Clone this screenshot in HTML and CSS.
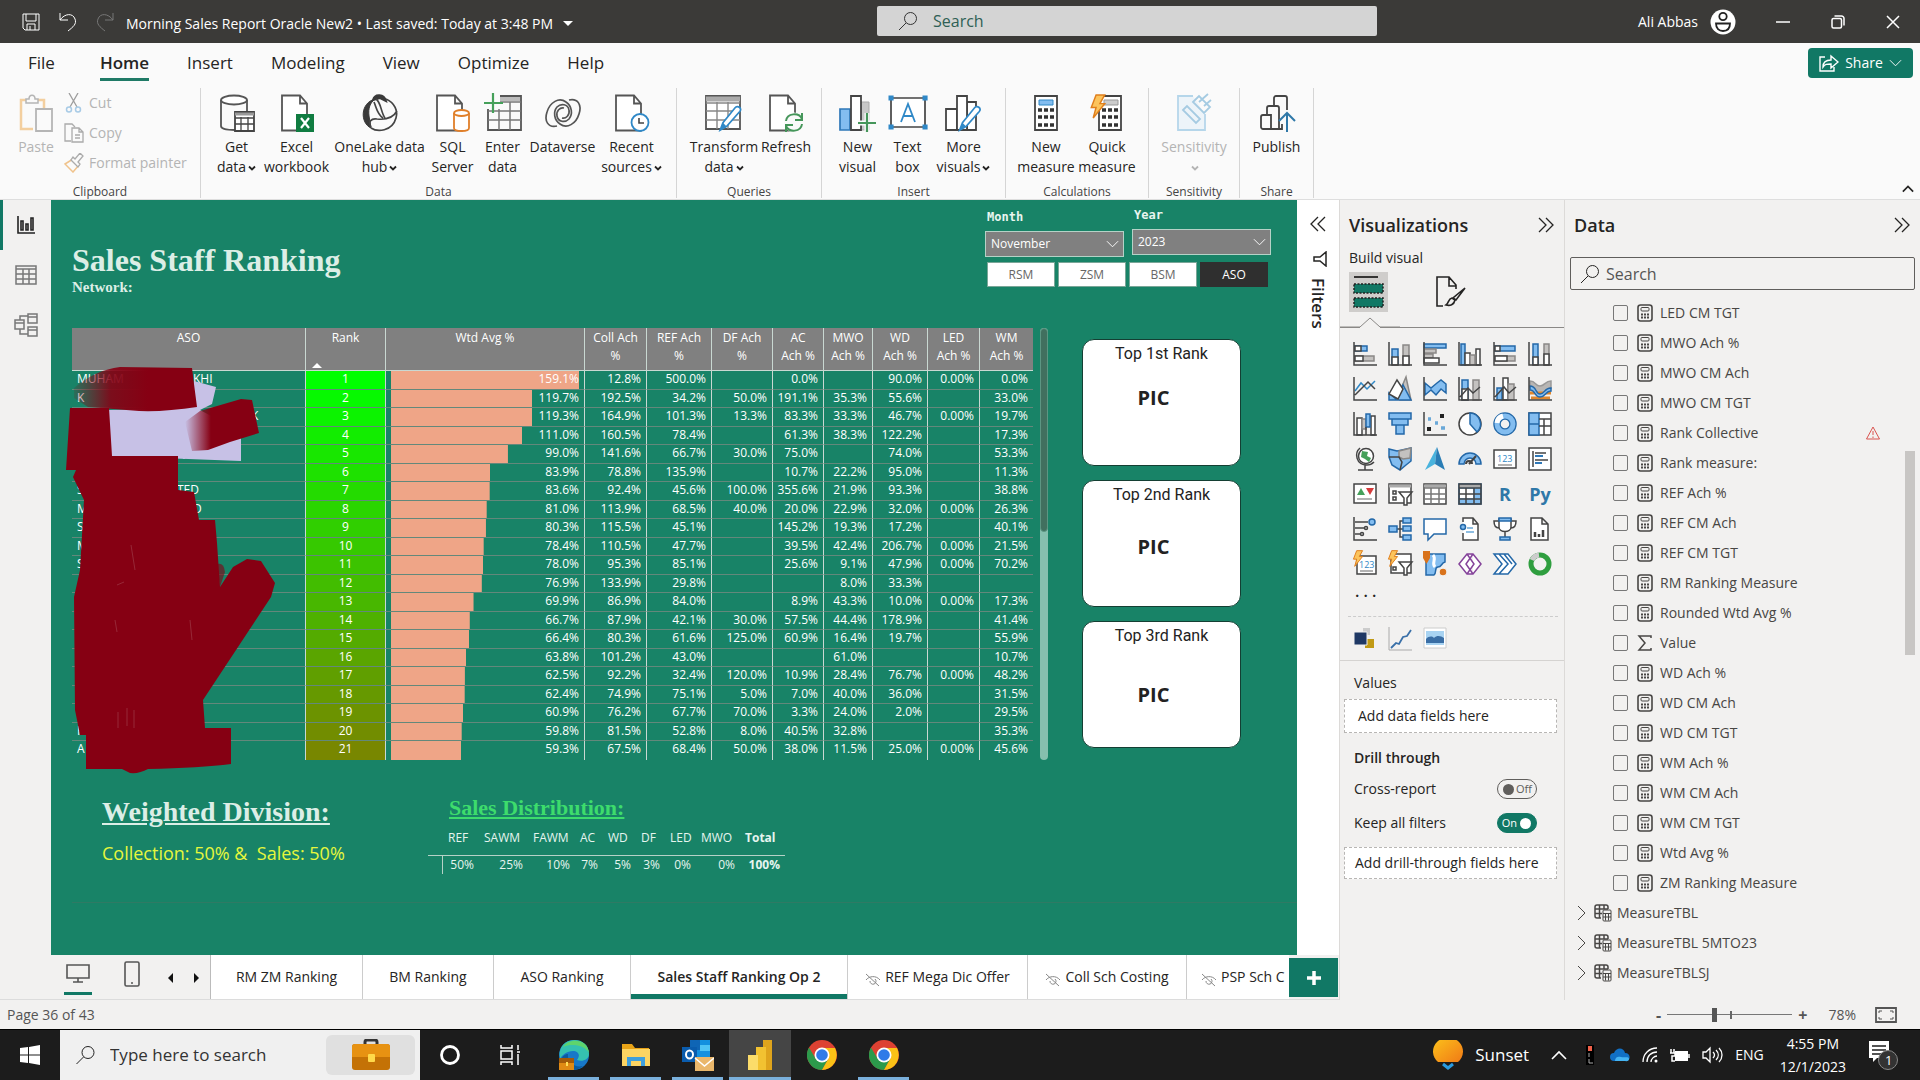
FILE: index.html
```html
<!DOCTYPE html>
<html lang="en">
<head>
<meta charset="utf-8">
<title>Morning Sales Report Oracle New2</title>
<link rel="stylesheet" href="styles.css">
</head>
<body>
<svg class="defs" aria-hidden="true">
  <symbol id="i-search" viewBox="0 0 20 20"><circle cx="12.500" cy="7.500" r="6" /><path d="M8 12 1 19"/></symbol>
  <symbol id="i-down" viewBox="0 0 8 8"><path d="M1 2.500 4 5.500 7 2.500" stroke-width="1.800"/></symbol>
  <symbol id="i-chev" viewBox="0 0 14 8"><path d="M1 1 7 7 13 1"/></symbol>
  <symbol id="i-right" viewBox="0 0 10 16"><path d="M1 1 8 8 1 15"/></symbol>
  <symbol id="i-dbl" viewBox="0 0 16 16"><path d="M1 1 8 8 1 15M8 1 15 8 8 15" stroke-width="1.300"/></symbol>
  <symbol id="i-calc" viewBox="0 0 16 18"><rect x="1" y="1" width="14" height="16" rx="2.500" stroke-width="1.600"/><rect x="4" y="3.500" width="8" height="3.500" rx="1"/><path d="M4 10.500h2M7 10.500h2M10 10.500h2M4 13.500h2M7 13.500h2M10 13.500h2" stroke-width="2"/></symbol>
  <symbol id="i-mtable" viewBox="0 0 18 18"><path d="M14 5V3a2 2 0 0 0-2-2H3a2 2 0 0 0-2 2v9a2 2 0 0 0 2 2h4M1 5h13M1 9.500h7M5.500 1v13M10 1v4" stroke-width="1.500"/><rect x="9" y="6" width="8" height="11" rx="1"/><path d="M9 9.500h8M11.500 9.500v7M14.500 9.500v7M9 13h8" /></symbol>
  <symbol id="i-page" viewBox="0 0 34 38"><path d="M2 1.500h18l7 8v27H2zM20 1.500v8h7" fill="#fff" stroke="#555" stroke-width="1.800"/></symbol>
  <symbol id="i-hidden" viewBox="0 0 16 14"><path d="M1 1 14 13M1 7C4 3 11 2 15 7M5 8a3 3 0 1 0 5-2"/></symbol>
  <symbol id="i-chrome" viewBox="0 0 30 30"><circle cx="15" cy="15" r="15" fill="#dd4132"/><path d="M2 7.500A15 15 0 0 0 15 30L21.500 18.500 8.500 18.500z" fill="#2c9a4b"/><path d="M15 30A15 15 0 0 0 28 8H15l6.500 10.500z" fill="#fbc116"/><circle cx="15" cy="15" r="7.500" fill="#fff"/><circle cx="15" cy="15" r="5.800" fill="#2f7be8"/></symbol>
  <symbol id="i-pencil" viewBox="0 0 24 30"><path d="M2 28 5 20 18 4a3 3 0 0 1 5 4L9 24z" fill="#fff" stroke="#2f88c7" stroke-width="1.800"/><path d="M2 28 5 20 9 24z" fill="#2f88c7"/></symbol>
  <symbol id="i-bolt" viewBox="0 0 16 26"><path d="M6 1h9l-5 9h5L3 25 6 14H1z" fill="#fcc45c" stroke="#e07f1c" stroke-width="1.500"/></symbol>
</svg>

<header class="titlebar">
  <div class="quick">
    <button aria-label="Save"><svg width="18" height="18" viewBox="0 0 18 18"><path d="M1 1h16v16H3l-2-2zM4 1v7h10V1M5 17v-6h8v6M8 13v4"/></svg></button>
    <button aria-label="Undo"><svg width="18" height="20" viewBox="0 0 18 20"><path d="M1 1v7h8M1 8C6 1 14 1 16 7c2 5-2 8-7 12"/></svg></button>
    <button aria-label="Redo" class="dim"><svg width="18" height="20" viewBox="0 0 18 20"><path d="M17 1v7H9M17 8C12 1 4 1 2 7c-2 5 2 8 7 12"/></svg></button>
  </div>
  <button class="doc">Morning Sales Report Oracle New2 • Last saved: Today at 3:48 PM <i class="caret"></i></button>
  <label class="topsearch"><svg width="20" height="20"><use href="#i-search"/></svg><input type="text" placeholder="Search" aria-label="Search"></label>
  <div class="account"><span>Ali Abbas</span>
    <svg width="26" height="26" viewBox="0 0 26 26"><circle cx="13" cy="13" r="12.500" fill="#fff"/><circle cx="13" cy="7.500" r="3.700" stroke="#222" stroke-width="1.800"/><path d="M6 14.500h14c0 5-3 7.500-7 7.500s-7-2.500-7-7.500z" stroke="#222" stroke-width="1.800"/></svg></div>
  <div class="winbtns">
    <button aria-label="Minimize"><svg width="14" height="14" viewBox="0 0 14 14"><path d="M0 7h14" stroke-width="1.500"/></svg></button>
    <button aria-label="Restore"><svg width="14" height="14" viewBox="0 0 14 14"><rect x="1" y="3.500" width="9.500" height="9.500" rx="1.500" stroke-width="1.500"/><path d="M3.500 1h7A2.500 2.500 0 0 1 13 3.500v7" stroke-width="1.500"/></svg></button>
    <button aria-label="Close"><svg width="14" height="14" viewBox="0 0 14 14"><path d="M1 1 13 13M13 1 1 13" stroke-width="1.500"/></svg></button>
  </div>
</header>

<nav class="menu">
  <a href="#file">File</a><a href="#home" class="on">Home</a><a href="#insert">Insert</a><a href="#modeling">Modeling</a><a href="#view">View</a><a href="#optimize">Optimize</a><a href="#help">Help</a>
  <button class="share"><svg width="20" height="18" viewBox="0 0 20 18"><path d="M6 3H1v14h14v-4M4 13c0-5 3-7 8-7V2l7 6-7 6v-4c-4 0-6 0-8 3z" stroke-width="1.400"/></svg>Share<svg width="13" height="8"><use href="#i-chev"/></svg></button>
</nav>

<section class="ribbon">
  <div class="group clip off">
    <div class="tools">
      <button class="tool paste"><svg width="34" height="38" viewBox="0 0 34 38"><path d="M14 35H2V6h5M19 6h6v8" stroke="#f3cf9f" stroke-width="2.500"/><path d="M7 9V5h3c0-5 6-5 6 0h3v4z" fill="#fafafa" stroke="#b5b5b5" stroke-width="1.500"/><path d="M17 15h16v22H17z" fill="#fafafa" stroke="#b5b5b5" stroke-width="1.800"/></svg>Paste</button>
      <div class="minis">
        <button><svg width="20" height="20" viewBox="0 0 20 20"><path d="M5 0 13 14M14 0 6 14" stroke="#9d9d9d" stroke-width="1.300"/><circle cx="5" cy="16.500" r="2.500" stroke="#a8cbe6" stroke-width="1.500"/><circle cx="14" cy="16.500" r="2.500" stroke="#a8cbe6" stroke-width="1.500"/></svg>Cut</button>
        <button><svg width="20" height="20" viewBox="0 0 20 20"><path d="M7 18H1V1h7l3 3" stroke="#ababab" stroke-width="1.300"/><path d="M8 5h7l4 4v10H8zM11 12h5M11 15h5M15 5v4h4" stroke="#ababab" stroke-width="1.300"/></svg>Copy</button>
        <button><svg width="20" height="20" viewBox="0 0 20 20"><path d="M1 11 9 6l6 6-6 7z" stroke="#f0c38c" stroke-width="1.500"/><path d="m7 7 7 7 2-3-2-2 5-6-3-3-5 6-2-2z" fill="#fafafa" stroke="#ababab" stroke-width="1.300"/></svg>Format painter</button>
      </div>
    </div>
    <p>Clipboard</p>
  </div>
  <div class="group g-data">
    <div class="tools">
      <button class="tool w52"><svg width="36" height="38" viewBox="0 0 36 38"><path d="M2 6v26c0 3 6 4 14 4M28 6v12" stroke="#555" stroke-width="1.800"/><ellipse cx="15" cy="6" rx="13" ry="4.500" fill="#fff" stroke="#555" stroke-width="1.800"/><path d="M16 18h19v19H16z" fill="#fff" stroke="#444" stroke-width="1.800"/><path d="M16 20h19" stroke="#999" stroke-width="3"/><path d="M16 24h19M16 30h19M22 23v14M29 23v14" stroke="#444" stroke-width="1.300"/></svg><span>Get<br>data<svg class="dn"><use href="#i-down"/></svg></span></button>
      <button class="tool w68"><svg width="34" height="38"><use href="#i-page"/><path d="M16 20h18v18H16z" fill="#107c41"/><path d="m21 24 8 10M29 24l-8 10" stroke="#fff" stroke-width="2.200"/></svg><span>Excel<br>workbook</span></button>
      <button class="tool w98"><svg width="36" height="38" viewBox="0 0 36 38"><path d="M13 5C-2 9-2 29 9 34L7 22C6 14 8 9 13 5z" fill="#3a3a3a" stroke="#3a3a3a"/><path d="M11 6C13-1 22 0 24 7L18 4z" fill="#3a3a3a" stroke="#3a3a3a" stroke-width="2"/><path d="M24 5c9 4 12 12 10 19-4 14-19 14-25 10M12 8c3 7 3 12 9 16M9 33c-3-5 0-9 6-8 9 1 16-1 20-8M14 5c5 3 5 14 9 19" stroke="#444" stroke-width="1.700"/></svg><span>OneLake data<br>hub<svg class="dn"><use href="#i-down"/></svg></span></button>
      <button class="tool w48"><svg width="36" height="38"><use href="#i-page" width="34" height="38"/><path d="M19 19v15c0 4 15 4 15 0V19" fill="#fff" stroke="#e07f2a" stroke-width="1.800"/><ellipse cx="26.500" cy="19" rx="7.500" ry="3" fill="#fff" stroke="#e07f2a" stroke-width="1.800"/></svg><span>SQL<br>Server</span></button>
      <button class="tool w52"><svg width="38" height="38" viewBox="0 0 38 38"><path d="M4 15v21h33V2H16" stroke="#555" stroke-width="1.800"/><path d="M16 3h20v4H16z" fill="#bbb"/><path d="M4 17h33M4 26h33M15 15v21M26 8v28M16 8h21" stroke="#777" stroke-width="1.500"/><path d="M9-1v20M0 9h19" stroke="#45a05a" stroke-width="2.200"/></svg><span>Enter<br>data</span></button>
      <button class="tool w68"><svg width="36" height="38" viewBox="0 0 36 38"><g stroke="#555" stroke-width="1.700"><path d="M12 32C3 34-1 27 2 18 5 8 14 3 21 8c6 4 7 12 3 17-4 4-11 3-12-3-1-5 3-9 7-8"/><path d="M24 6C33 4 37 11 34 20 31 30 22 35 15 30c-6-4-7-12-3-17 4-4 11-3 12 3 1 5-3 9-7 8"/></g></svg><span>Dataverse</span></button>
      <button class="tool w70"><svg width="36" height="38"><use href="#i-page" width="34" height="38"/><circle cx="26" cy="28.500" r="8.500" fill="#fff" stroke="#2f88c7" stroke-width="1.800"/><path d="M25 24v5h5" stroke="#444" stroke-width="1.600"/></svg><span>Recent<br>sources<svg class="dn"><use href="#i-down"/></svg></span></button>
    </div>
    <p>Data</p>
  </div>
  <div class="group g-queries">
    <div class="tools">
      <button class="tool w74"><svg width="40" height="38"><path d="M2 2h34v33H2z" fill="#fff" stroke="#555" stroke-width="1.800"/><path d="M2 5h34" stroke="#aaa" stroke-width="5"/><path d="M2 9h34M2 17h34M2 26h34M13 8v27M24 8v27" stroke="#888" stroke-width="1.400"/><use href="#i-pencil" x="12" y="10" width="27" height="28"/></svg><span>Transform<br>data<svg class="dn"><use href="#i-down"/></svg></span></button>
      <button class="tool w50"><svg width="36" height="38"><use href="#i-page" width="34" height="38"/><circle cx="26" cy="28.500" r="10" fill="#fafafa"/><path d="M18 27c1-8 13-9 16-2M34 19v7h-7M34 30c-1 8-13 9-16 2M18 38v-7h7" stroke="#45965a" stroke-width="2"/></svg><span>Refresh</span></button>
    </div>
    <p>Queries</p>
  </div>
  <div class="group g-insert">
    <div class="tools">
      <button class="tool w50"><svg width="38" height="38"><path d="M1 15h10v21H1z" fill="#83bdf0" stroke="#2f78b8" stroke-width="1.700"/><path d="M22 8h8v28h-8z" fill="#c8c8c8" stroke="#aaa"/><path d="M12 2h10v34H12z" fill="#fff" stroke="#444" stroke-width="1.800"/><path d="M28 19v19M19 29h18" stroke="#fafafa" stroke-width="5"/><path d="M28 19v19M19 29h18" stroke="#45965a" stroke-width="2.200"/></svg><span>New<br>visual</span></button>
      <button class="tool w50"><svg width="38" height="38"><path d="M2 4h34v29H2z" fill="#fff" stroke="#444" stroke-width="1.700"/><path d="M2 4h.1M36 4h.1M2 33h.1M36 33h.1" stroke="#2f88c7" stroke-width="5" stroke-linecap="square"/><path d="m12 28 7-18 7 18M14 22h10" stroke="#2f88c7" stroke-width="1.800"/></svg><span>Text<br>box</span></button>
      <button class="tool w62"><svg width="38" height="38"><path d="M1 15h11v21H1zM22 8h9v28h-9z" fill="#fff" stroke="#444" stroke-width="1.800"/><path d="M12 2h10v34H12z" fill="#fff" stroke="#444" stroke-width="1.800"/><use href="#i-pencil" x="10" y="10" width="28" height="28"/></svg><span>More<br>visuals<svg class="dn"><use href="#i-down"/></svg></span></button>
    </div>
    <p>Insert</p>
  </div>
  <div class="group g-calc">
    <div class="tools">
      <button class="tool w60"><svg width="28" height="38"><path d="M3 2h22v34H3z" fill="#fff" stroke="#444" stroke-width="1.800"/><path d="M7 6h14v5H7z" fill="#83bdf0" stroke="#2f88c7"/><path d="M6 16h16M6 23h16M6 31h16" stroke="#333" stroke-width="3.500" stroke-dasharray="4 2"/></svg><span>New<br>measure</span></button>
      <button class="tool w62"><svg width="36" height="38"><path d="M10 2h22v34H10z" fill="#fff" stroke="#444" stroke-width="1.800"/><path d="M15 6h14v5H15z" fill="#ccc" stroke="#999"/><path d="M13 16h16M13 23h16M13 31h16" stroke="#333" stroke-width="3.500" stroke-dasharray="4 2"/><use href="#i-bolt" x="0" y="0" width="18" height="25"/></svg><span>Quick<br>measure</span></button>
    </div>
    <p>Calculations</p>
  </div>
  <div class="group g-sens off">
    <div class="tools">
      <button class="tool w72"><svg width="36" height="38"><path d="M17 2H2v34h27V20" fill="#edf4f9" stroke="#b5d6ea" stroke-width="1.800"/><path d="m7 16 4-4 13 13-4 4zM17 8l6-6 11 11-6 6zM23 8l9-8M28 12l7-6" stroke="#a5cbe2" stroke-width="1.800"/></svg><span>Sensitivity<br><svg class="dn"><use href="#i-down"/></svg></span></button>
    </div>
    <p>Sensitivity</p>
  </div>
  <div class="group g-share">
    <div class="tools">
      <button class="tool w56"><svg width="36" height="38"><path d="M16 35H4a2 2 0 0 1-2-2V23a2 2 0 0 1 2-2h8v14h11v-5M8 21v-7a2 2 0 0 1 2-2h8a2 2 0 0 1 2 2v21M15 12V4a2 2 0 0 1 2-2h9a2 2 0 0 1 2 2v12" stroke="#444" stroke-width="1.800"/><path d="M28 38V20M20 27l8-8 8 8" stroke="#2f78a8" stroke-width="2"/></svg><span>Publish</span></button>
    </div>
    <p>Share</p>
  </div>
  <button class="collapse" aria-label="Collapse ribbon"><svg width="12" height="8" viewBox="0 0 14 8"><path d="M1 7 7 1 13 7" stroke-width="2"/></svg></button>
</section>

<main class="work">
  <div class="left">
    <div class="stage">
      <nav class="rail">
        <button class="on" aria-label="Report view"><svg width="18" height="18" viewBox="0 0 18 18"><path d="M1 0v17h17M4 14V5h2v9zM9 14V8h2v6zM14 14V2h2v12z" stroke-width="1.600"/></svg></button>
        <button aria-label="Table view"><svg width="22" height="20" viewBox="0 0 22 20"><path d="M1 1h20v18H1zM1 4h20M1 9h20M1 14h20M8 4v15M14 4v15" stroke-width="1.500"/></svg></button>
        <button aria-label="Model view"><svg width="24" height="24" viewBox="0 0 24 24"><path d="M1 7h9v9H1zM1 10h9M14 1h9v9h-9zM14 4h9M14 14h9v9h-9zM14 17h9M6 7V3h8M6 16v5h8" stroke-width="1.500"/></svg></button>
      </nav>

      <section class="report">
        <div class="head">
          <div class="titles"><h1>Sales Staff Ranking</h1><h2>Network:</h2></div>
          <div class="slicers">
            <div class="drops">
              <label class="drop"><span>Month</span><div class="pick"><select><option>November</option></select><svg width="13" height="8"><use href="#i-chev"/></svg></div></label>
              <label class="drop"><span>Year</span><div class="pick"><select><option>2023</option></select><svg width="13" height="8"><use href="#i-chev"/></svg></div></label>
            </div>
            <div class="levels"><button>RSM</button><button>ZSM</button><button>BSM</button><button class="on">ASO</button></div>
          </div>
        </div>

        <div class="body">
          <div class="ranking">
            <table>
              <colgroup><col class="c233"><col class="c80"><col class="c199"><col class="c62"><col class="c65"><col class="c61"><col class="c51"><col class="c49"><col class="c55"><col class="c52"><col class="c53"></colgroup>
              <thead><tr><th>ASO</th><th>Rank<i class="sort"></i></th><th>Wtd Avg %</th><th>Coll Ach<br>%</th><th>REF Ach<br>%</th><th>DF Ach<br>%</th><th>AC<br>Ach %</th><th>MWO<br>Ach %</th><th>WD<br>Ach %</th><th>LED<br>Ach %</th><th>WM<br>Ach %</th></tr></thead>
              <tbody>
<tr><td><span class="lead116">MUHAM</span>KHI</td><td style="background:rgb(0,255,0)">1</td><td style="--bar:100%">159.1%</td><td>12.8%</td><td>500.0%</td><td></td><td>0.0%</td><td></td><td>90.0%</td><td>0.00%</td><td>0.0%</td></tr>
<tr><td>K</td><td style="background:rgb(6,249,0)">2</td><td style="--bar:75.2%">119.7%</td><td>192.5%</td><td>34.2%</td><td>50.0%</td><td>191.1%</td><td>35.3%</td><td>55.6%</td><td></td><td>33.0%</td></tr>
<tr><td><span class="lead174"></span>K</td><td style="background:rgb(12,243,0)">3</td><td style="--bar:75%">119.3%</td><td>164.9%</td><td>101.3%</td><td>13.3%</td><td>83.3%</td><td>33.3%</td><td>46.7%</td><td>0.00%</td><td>19.7%</td></tr>
<tr><td></td><td style="background:rgb(18,237,0)">4</td><td style="--bar:69.8%">111.0%</td><td>160.5%</td><td>78.4%</td><td></td><td>61.3%</td><td>38.3%</td><td>122.2%</td><td></td><td>17.3%</td></tr>
<tr><td><span class="lead100"></span>QIA</td><td style="background:rgb(24,231,0)">5</td><td style="--bar:62.2%">99.0%</td><td>141.6%</td><td>66.7%</td><td>30.0%</td><td>75.0%</td><td></td><td>74.0%</td><td></td><td>53.3%</td></tr>
<tr><td></td><td style="background:rgb(30,225,0)">6</td><td style="--bar:52.7%">83.9%</td><td>78.8%</td><td>135.9%</td><td></td><td>10.7%</td><td>22.2%</td><td>95.0%</td><td></td><td>11.3%</td></tr>
<tr><td><span class="lead100">S</span>TED</td><td style="background:rgb(36,219,0)">7</td><td style="--bar:52.5%">83.6%</td><td>92.4%</td><td>45.6%</td><td>100.0%</td><td>355.6%</td><td>21.9%</td><td>93.3%</td><td></td><td>38.8%</td></tr>
<tr><td><span class="lead116">M</span>D</td><td style="background:rgb(42,213,0)">8</td><td style="--bar:50.9%">81.0%</td><td>113.9%</td><td>68.5%</td><td>40.0%</td><td>20.0%</td><td>22.9%</td><td>32.0%</td><td>0.00%</td><td>26.3%</td></tr>
<tr><td>S</td><td style="background:rgb(48,207,0)">9</td><td style="--bar:50.5%">80.3%</td><td>115.5%</td><td>45.1%</td><td></td><td>145.2%</td><td>19.3%</td><td>17.2%</td><td></td><td>40.1%</td></tr>
<tr><td>M</td><td style="background:rgb(54,201,0)">10</td><td style="--bar:49.3%">78.4%</td><td>110.5%</td><td>47.7%</td><td></td><td>39.5%</td><td>42.4%</td><td>206.7%</td><td>0.00%</td><td>21.5%</td></tr>
<tr><td>S</td><td style="background:rgb(60,195,0)">11</td><td style="--bar:49%">78.0%</td><td>95.3%</td><td>85.1%</td><td></td><td>25.6%</td><td>9.1%</td><td>47.9%</td><td>0.00%</td><td>70.2%</td></tr>
<tr><td></td><td style="background:rgb(66,189,0)">12</td><td style="--bar:48.3%">76.9%</td><td>133.9%</td><td>29.8%</td><td></td><td></td><td>8.0%</td><td>33.3%</td><td></td><td></td></tr>
<tr><td></td><td style="background:rgb(72,183,0)">13</td><td style="--bar:43.9%">69.9%</td><td>86.9%</td><td>84.0%</td><td></td><td>8.9%</td><td>43.3%</td><td>10.0%</td><td>0.00%</td><td>17.3%</td></tr>
<tr><td></td><td style="background:rgb(78,177,0)">14</td><td style="--bar:41.9%">66.7%</td><td>87.9%</td><td>42.1%</td><td>30.0%</td><td>57.5%</td><td>44.4%</td><td>178.9%</td><td></td><td>41.4%</td></tr>
<tr><td></td><td style="background:rgb(84,171,0)">15</td><td style="--bar:41.7%">66.4%</td><td>80.3%</td><td>61.6%</td><td>125.0%</td><td>60.9%</td><td>16.4%</td><td>19.7%</td><td></td><td>55.9%</td></tr>
<tr><td></td><td style="background:rgb(90,165,0)">16</td><td style="--bar:40.1%">63.8%</td><td>101.2%</td><td>43.0%</td><td></td><td></td><td>61.0%</td><td></td><td></td><td>10.7%</td></tr>
<tr><td></td><td style="background:rgb(96,159,0)">17</td><td style="--bar:39.3%">62.5%</td><td>92.2%</td><td>32.4%</td><td>120.0%</td><td>10.9%</td><td>28.4%</td><td>76.7%</td><td>0.00%</td><td>48.2%</td></tr>
<tr><td></td><td style="background:rgb(102,153,0)">18</td><td style="--bar:39.2%">62.4%</td><td>74.9%</td><td>75.1%</td><td>5.0%</td><td>7.0%</td><td>40.0%</td><td>36.0%</td><td></td><td>31.5%</td></tr>
<tr><td></td><td style="background:rgb(108,147,0)">19</td><td style="--bar:38.3%">60.9%</td><td>76.2%</td><td>67.7%</td><td>70.0%</td><td>3.3%</td><td>24.0%</td><td>2.0%</td><td></td><td>29.5%</td></tr>
<tr><td>H</td><td style="background:rgb(114,141,0)">20</td><td style="--bar:37.6%">59.8%</td><td>81.5%</td><td>52.8%</td><td>8.0%</td><td>40.5%</td><td>32.8%</td><td></td><td></td><td>35.3%</td></tr>
<tr><td>A</td><td style="background:rgb(120,135,0)">21</td><td style="--bar:37.3%">59.3%</td><td>67.5%</td><td>68.4%</td><td>50.0%</td><td>38.0%</td><td>11.5%</td><td>25.0%</td><td>0.00%</td><td>45.6%</td></tr>
              </tbody>
            </table>
            <svg class="scribble" viewBox="60 360 220 420" width="220" height="420" aria-hidden="true">
              <defs>
                <linearGradient id="fade" x1="0" x2="1"><stop offset="0" stop-color="#860013" stop-opacity="0"/><stop offset=".35" stop-color="#860013"/></linearGradient>
                <linearGradient id="fade2" x1="0" x2="1"><stop offset="0" stop-color="#860013" stop-opacity=".15"/><stop offset=".3" stop-color="#860013" stop-opacity=".9"/><stop offset=".6" stop-color="#860013"/></linearGradient>
              </defs>
              <path d="M194 381 216 387 212 404 200 410 241 432V461L109 456V410L190 408z" fill="#c7c1e6"/>
              <path d="M74 388Q95 370 120 367L192 368 194 384 197 407Q165 412 139 411L88 407 74 398z" fill="url(#fade2)"/>
              <path d="M185 422 200 411 241 399 252 400 259 433 230 442 208 450 192 451z" fill="url(#fade)"/>
              <path d="M70 408H109L112 456H178V490L194 492 199 520H215L217 543 220 587 233 567 247 559 261 561 275 583 271 597 203 700 205 728H231V764Q200 768 148 769 139 774 130 773L122 769H86V735H80L75 710 74 597 80 570 84 500 73 477 76 470 66 470z" fill="#860013"/>
              <path d="M217 564Q224 562 225 572L220 587z" fill="#860013" opacity=".6"/>
              <path d="M131 545 135 570M117 585 124 582M115 620 117 632M190 620 192 640M118 712v16M127 708v18M134 710v18" stroke="#a8505c" stroke-width="1" opacity=".5"/>
            </svg>
          </div>
          <div class="scroll"><i></i></div>
          <div class="cards">
            <article><h3>Top 1st Rank</h3><strong>PIC</strong></article>
            <article><h3>Top 2nd Rank</h3><strong>PIC</strong></article>
            <article><h3>Top 3rd Rank</h3><strong>PIC</strong></article>
          </div>
        </div>

        <div class="foot">
          <div class="weights"><h3>Weighted Division:</h3><p>Collection: 50% &amp;&nbsp; Sales: 50%</p></div>
          <div class="dist"><h3>Sales Distribution:</h3>
            <table>
              <colgroup><col class="c15"><col class="c36"><col class="c49"><col class="c47"><col class="c28"><col class="c33"><col class="c29"><col class="c31"><col class="c44"><col class="c45"></colgroup>
              <thead><tr><td></td><th>REF</th><th>SAWM</th><th>FAWM</th><th>AC</th><th>WD</th><th>DF</th><th>LED</th><th>MWO</th><th>Total</th></tr></thead>
              <tbody><tr><td></td><td>50%</td><td>25%</td><td>10%</td><td>7%</td><td>5%</td><td>3%</td><td>0%</td><td>0%</td><td>100%</td></tr></tbody>
            </table>
          </div>
        </div>
      </section>

      <aside class="filters">
        <button aria-label="Expand filters"><svg class="flip" width="16" height="16"><use href="#i-dbl"/></svg></button>
        <svg width="14" height="16" viewBox="0 0 14 16"><path d="M13 1v14L7 10H1V6h6z" stroke-width="1.500"/></svg>
        <span>Filters</span>
      </aside>
    </div>

    <div class="pages">
      <div class="modes">
        <button class="on" aria-label="Desktop layout"><svg width="24" height="20" viewBox="0 0 24 20"><path d="M1 1h22v13H1zM12 14v4M7 18h10" stroke-width="1.600"/></svg></button>
        <button aria-label="Mobile layout"><svg width="16" height="26" viewBox="0 0 16 26"><rect x="1" y="1" width="14" height="24" rx="1.500" stroke-width="1.600"/><path d="M7 22h2" stroke-width="1.600"/></svg></button>
        <button class="arrow" aria-label="Previous"><i class="prev"></i></button>
        <button class="arrow" aria-label="Next"><i class="next"></i></button>
      </div>
      <div class="tabs">
        <a href="#p1" class="c152">RM ZM Ranking</a><a href="#p2" class="c131">BM Ranking</a><a href="#p3" class="c137">ASO Ranking</a><a href="#p4" class="c217 on">Sales Staff Ranking Op 2</a>
        <a href="#p5" class="c180"><svg width="16" height="14"><use href="#i-hidden"/></svg>REF Mega Dic Offer</a><a href="#p6" class="c159"><svg width="16" height="14"><use href="#i-hidden"/></svg>Coll Sch Costing</a><a href="#p7" class="last"><svg width="16" height="14"><use href="#i-hidden"/></svg>PSP Sch C</a>
      </div>
      <button class="add" aria-label="New page"><svg width="14" height="14" viewBox="0 0 14 14"><path d="M7 0v14M0 7h14" stroke-width="3.500"/></svg></button>
    </div>
  </div>

  <aside class="viz">
    <header><h2>Visualizations</h2><button aria-label="Collapse"><svg width="16" height="16"><use href="#i-dbl"/></svg></button></header>
    <p class="sub">Build visual</p>
    <div class="kinds">
      <button class="on" aria-label="Build"><svg width="32" height="34" viewBox="0 0 32 34"><path d="M1 2h24" stroke-width="1.800"/><path d="M1 9h29v9H1zM1 23h29v9H1z" fill="#117865" stroke="#222" stroke-width="1.500" stroke-dasharray="2 1.500"/></svg></button>
      <button aria-label="Format"><svg width="30" height="32" viewBox="0 0 30 32"><path d="M7 30H1V1h12l7 8v4M13 1v9h7M29 12 20 24l-3-2zM19 24c-1 5-5 6-9 5 3-2 2-6 6-7z" stroke-width="1.600"/></svg></button>
    </div>
    <svg class="notch" width="60" height="11" viewBox="0 0 60 11"><path d="M0 10H20L30 1 40 10H60" stroke="#8a8886"/></svg>
    <div class="gallery">
      <button aria-label="Stacked bar"><svg viewBox="0 0 24 24"><path class="b" d="M2 4h12v5H2z"/><path class="w" d="M2 4h6v5H2z"/><path class="g" d="M2 14h19v5H2z"/><path class="w" d="M2 14h8v5H2z"/><path d="M1 0v23h23"/></svg></button>
      <button aria-label="Stacked column"><svg viewBox="0 0 24 24"><path class="b" d="M4 7h6v15H4z"/><path class="w" d="M4 15h6v8H4z"/><path class="g" d="M15 3h6v19h-6z"/><path class="w" d="M15 14h6v9h-6z"/><path d="M1 0v23h23"/></svg></button>
      <button aria-label="Clustered bar"><svg viewBox="0 0 24 24"><path class="b" d="M1 2h22v4H1z"/><path class="g" d="M1 7h12v4H1zM1 12h9v4H1z"/><path class="w" d="M1 16h15v5H1z"/><path d="M1 0v23h23"/></svg></button>
      <button aria-label="Clustered column"><svg viewBox="0 0 24 24"><path class="b" d="M3 2h4v21H3z"/><path class="w" d="M7 11h5v12H7zM18 7h4v16h-4z"/><path class="g" d="M12 13h5v10h-5z"/><path d="M1 0v23h23"/></svg></button>
      <button aria-label="100% bar"><svg viewBox="0 0 24 24"><path class="b" d="M2 4h20v5H2z"/><path class="w" d="M2 4h5v5H2z"/><path class="g" d="M2 14h20v5H2z"/><path class="w" d="M2 14h12v5H2z"/><path d="M1 0v23h23"/></svg></button>
      <button aria-label="100% column"><svg viewBox="0 0 24 24"><path class="b" d="M5 2h5v20H5z"/><path class="w" d="M5 15h5v8H5z"/><path class="g" d="M16 2h5v20h-5z"/><path class="w" d="M16 12h5v11h-5z"/><path d="M1 0v23h23"/></svg></button>
      <button aria-label="Line"><svg viewBox="0 0 24 24"><path d="M2 14 8 6l6 6 8-8" stroke="#2f88c7"/><path d="m2 18 8-8 5-5 7 7M1 0v23h23"/></svg></button>
      <button aria-label="Area"><svg viewBox="0 0 24 24"><path class="g" d="M12 14 18 0l5 23H12z"/><path class="b" d="M1 16 8 22l7-14 8 15H1z"/><path class="w" d="M1 17 9 3l6 9-5 10z"/></svg></button>
      <button aria-label="Stacked area"><svg viewBox="0 0 24 24"><path class="b" d="M2 6l6 5 6-5 4-3 5 4v9l-5-4-5 6-5-5-6 5z"/><path d="M1 0v23h23"/></svg></button>
      <button aria-label="Line and stacked column"><svg viewBox="0 0 24 24"><path class="b" d="M4 3h6v20H4z"/><path class="w" d="M4 12h6v11H4z"/><path class="g" d="M15 3h6v20h-6z"/><path d="m2 20 8-9 5 5 7-6M1 0v23h23"/></svg></button>
      <button aria-label="Line and clustered column"><svg viewBox="0 0 24 24"><path class="b" d="M4 11h5v12H4z"/><path class="w" d="M10 1h5v22h-5z"/><path class="g" d="M15 7h6v16h-6z"/><path d="m2 20 9-10 5 6 7-6M1 0v23h23"/></svg></button>
      <button aria-label="Ribbon chart"><svg viewBox="0 0 24 24"><path d="M2 4c6 0 5 5 10 5s5-5 11-5v7c-6 0-6 6-11 6S7 10 2 10z" fill="#b8b6b4" stroke="#999"/><path d="M2 16h21M3 21h19" stroke="#e0872d" stroke-width="3"/><path class="b" d="M2 9c7 0 5 8 10 8s4-6 11-6v3c-6 0-5 6-11 6S8 13 2 13z"/><path d="M1 0v23h23"/></svg></button>
      <button aria-label="Waterfall"><svg viewBox="0 0 24 24"><path class="w" d="M4 6h5v17H4zM18 4h4v19h-4z"/><path class="g" d="M9 7h4v10H9z"/><path class="b" d="M13 2h4v13h-4z"/><path d="M1 0v23h23M13 15v8"/></svg></button>
      <button aria-label="Funnel"><svg viewBox="0 0 24 24"><path class="b" d="M1 1h22v6H1zM4 7h16v6H4zM8 13h8v9H8z"/></svg></button>
      <button aria-label="Scatter"><svg viewBox="0 0 24 24"><path d="M1 0v23h23"/><path d="M17 4h4M4 17h4" stroke="#222" stroke-width="4"/><path d="M5 7h3M12 11h3M18 16h4" stroke="#6aa8d8" stroke-width="3.500"/></svg></button>
      <button aria-label="Pie"><svg viewBox="0 0 24 24"><circle class="w" cx="12" cy="12" r="11"/><path class="b" d="M12 1a11 11 0 0 1 7 19l-7-8z"/></svg></button>
      <button aria-label="Donut"><svg viewBox="0 0 24 24"><circle cx="12" cy="12" r="8" stroke="#2468a8" stroke-width="7.500"/><circle cx="12" cy="12" r="8" stroke="#83bdf0" stroke-width="5"/><path d="M4 11a8 8 0 0 1 6-7" stroke="#fff" stroke-width="5"/></svg></button>
      <button aria-label="Treemap"><svg viewBox="0 0 24 24"><path class="w" d="M1 1h22v22H1z"/><path class="b" d="M1 1h10v11H1zM1 12h10v11H1z"/><path d="M11 7h12M16 7v16M11 14h12"/></svg></button>
      <button aria-label="Map"><svg viewBox="0 0 24 24"><circle class="w" cx="13" cy="9" r="7.500"/><path d="M9 4l6 1-1 4 4 2-2 4-4-3-4-2z" fill="#45a05a"/><path d="M7 1C1 6 3 18 14 18c3 0 5-1 7-3M12 18v5M5 23h15"/></svg></button>
      <button aria-label="Filled map"><svg viewBox="0 0 24 24"><path class="b" d="M1 2l8 2 5-1 9-2v13l-5 4-6 5-8-5-3-8z"/><path class="g" d="M11 4l12-3-1 10-7 1-4-2z"/><path d="M1 10h10l3 5-2 8"/></svg></button>
      <button aria-label="Azure map"><svg viewBox="0 0 24 24"><path d="M14 0 2 23l10-6z" fill="#49b3dd"/><path d="M14 0 22 23l-10-6z" fill="#2a7db5"/></svg></button>
      <button aria-label="Gauge"><svg viewBox="0 0 24 24"><path class="b" d="M1 17a11 11 0 0 1 22 0h-5a6 6 0 0 0-12 0z"/><path d="M11 17 18 9M8 17a3 3 0 0 1 6 0" stroke-width="2"/></svg></button>
      <button aria-label="Card"><svg viewBox="0 0 24 24"><path class="w" d="M1 3h22v18H1z"/><text x="4" y="15">123</text><path d="M5 18h14" stroke="#999"/></svg></button>
      <button aria-label="Multi-row card"><svg viewBox="0 0 24 24"><path class="w" d="M1 1h22v22H1z"/><path d="M5 4v16M7 6h11M7 13h13" /><path d="M7 9h8M7 16h7" stroke="#2f78b8" stroke-width="2"/></svg></button>
      <button aria-label="KPI"><svg viewBox="0 0 24 24"><path class="w" d="M1 2h22v19H1z"/><path d="m4 13 4-7 4 7z" fill="#45a05a" stroke="none"/><path d="M13 6h8l-4 7z" fill="#d63b3b" stroke="none"/><path d="M4 17h15" stroke="#999"/></svg></button>
      <button aria-label="Slicer"><svg viewBox="0 0 24 24"><path class="w" d="M1 2h22v19H1z"/><path d="M1 4h22" stroke="#aaa" stroke-width="3"/><path d="M5 9h3v3H5zM5 15h3v3H5z"/><path class="w" d="M11 10h13l-5 6v7h-3v-7z"/></svg></button>
      <button aria-label="Table"><svg viewBox="0 0 24 24"><path class="w" d="M1 2h22v20H1z"/><path d="M1 4h22" stroke="#aaa" stroke-width="3"/><path d="M1 6h22M1 12h22M1 17h22M8 6v16M16 6v16" stroke="#777"/></svg></button>
      <button aria-label="Matrix"><svg viewBox="0 0 24 24"><path class="b" d="M1 2h22v20H1z"/><path d="M1 4h22" stroke="#aaa" stroke-width="3"/><path d="M2 7h13v9H2z" fill="#fff" stroke="none"/><path d="M1 2h22v20H1zM1 6h22M1 12h22M1 17h22M8 6v16M16 6v16"/></svg></button>
      <button class="letter" aria-label="R visual">R</button>
      <button class="letter" aria-label="Python visual">Py</button>
      <button aria-label="Key influencers"><svg viewBox="0 0 24 24"><path d="M1 0v23h23M2 5h13M2 11h9M2 17h5"/><circle class="b" cx="19" cy="5" r="3"/><circle cx="13" cy="11" r="1.500"/><circle cx="9" cy="17" r="1.500"/></svg></button>
      <button aria-label="Decomposition tree"><svg viewBox="0 0 24 24"><path d="M9 12h6M12 12V4h3M12 12v8h3"/><path class="b" d="M1 9h8v6H1zM15 1h8v5h-8zM15 9h8v5h-8zM15 18h8v5h-8z"/></svg></button>
      <button aria-label="Q&amp;A"><svg viewBox="0 0 24 24"><path class="w edge" d="M1 2h22v15H11l-6 6v-6H1z"/></svg></button>
      <button aria-label="Narrative"><svg viewBox="0 0 24 24"><path class="w" d="M5 5V1h10l5 6v16H5v-7M15 1v6h5"/><circle class="b" cx="5" cy="10" r="2.500"/><path d="M9 11h6M8 15h8" stroke="#6aa8d8"/></svg></button>
      <button aria-label="Metrics"><svg viewBox="0 0 24 24"><path class="w" d="M6 2h12v8c0 6-12 6-12 0zM6 4H1c0 5 2 7 5 7M18 4h5c0 5-2 7-5 7M12 15v5"/><path class="b" d="M6 1h12v3H6zM7 20h10v3H7z"/></svg></button>
      <button aria-label="Paginated report"><svg viewBox="0 0 24 24"><path class="w" d="M3 1h11l6 6v16H3zM14 1v6h6"/><path d="M7 20v-5M11 20v-3M15 20v-7" stroke-width="2.500"/></svg></button>
      <button aria-label="New card"><svg viewBox="0 0 24 24"><path class="w" d="M4 4h19v18H4z"/><text x="6" y="16">123</text><path d="M7 19h13" stroke="#999"/><use href="#i-bolt" x="-1" y="-2" width="12" height="17"/></svg></button>
      <button aria-label="New slicer"><svg viewBox="0 0 24 24"><path class="w" d="M3 2h20v19H3z"/><path d="M5 15h3v3H5z"/><path class="w" d="M11 10h13l-5 6v7h-3v-7z"/><use href="#i-bolt" x="-1" y="-2" width="12" height="17"/></svg></button>
      <button aria-label="Shape map"><svg viewBox="0 0 24 24"><path class="b" d="M3 2h19v8c-4 1-3 5-7 5s-1 6-4 8H3z"/><path d="M10 3c4 4-2 8 2 12" stroke="#fff" stroke-width="3"/><path d="M0-1h7v7l-3.500 6L0 6z" fill="#d9731c" stroke="none"/><circle cx="20" cy="20" r="4" fill="#d9731c" stroke="#f2f1f0"/></svg></button>
      <button aria-label="Power Apps"><svg viewBox="0 0 24 24"><path d="M1 12 9 2h6l8 10-8 10H9zM9 2l7 10-7 10M15 2 8 12l7 10" fill="#fff" stroke="#85439a"/></svg></button>
      <button aria-label="Power Automate"><svg viewBox="0 0 24 24"><path class="w edge" d="M1 2h14l8 10-8 10H1l8-10zM6 2l9 10-9 10M11 2l8 10"/></svg></button>
      <button aria-label="Advanced donut"><svg viewBox="0 0 24 24"><circle cx="12" cy="12" r="9" stroke="#2f9e3f" stroke-width="5"/><path d="M4 8a9 9 0 0 1 7-5" stroke="#ccc" stroke-width="5"/></svg></button>
    </div>
    <p class="more">. . .</p>
    <div class="custom">
      <svg width="24" height="24" viewBox="0 0 24 24"><path d="M10 1h7v7h-7z" fill="#ccc"/><path d="M12 12h9v9h-9z" fill="#c19a15"/><path d="M1 5h13v13H1z" fill="#1f3864" stroke="#f2f1f0"/></svg>
      <svg width="24" height="24" viewBox="0 0 24 24"><path d="M1 0v23h23" stroke="#aaa"/><path d="m3 21 5-5 3 1 4-7 4-1 4-6" stroke="#3a70a8" stroke-width="1.800"/></svg>
      <svg width="24" height="24" viewBox="0 0 24 24"><path d="M1 1h22v20H1z" fill="#fff" stroke="#ccc"/><path d="M3 4h18v14H3z" fill="#a8d3f2"/><path d="M3 12c3-3 6-3 8-1 3-3 7-2 10 0v5H3z" fill="#3a6ea5"/></svg>
    </div>
    <div class="wells">
      <h4>Values</h4>
      <div class="well tall">Add data fields here</div>
      <h4 class="bold">Drill through</h4>
      <label class="switch"><b>Cross-report</b><input type="checkbox"><span>Off</span></label>
      <label class="switch"><b>Keep all filters</b><input type="checkbox" checked><span>On</span></label>
      <div class="well">Add drill-through fields here</div>
    </div>
  </aside>

  <aside class="data">
    <header><h2>Data</h2><button aria-label="Collapse"><svg width="16" height="16"><use href="#i-dbl"/></svg></button></header>
    <label class="find"><svg width="20" height="20"><use href="#i-search"/></svg><input type="text" placeholder="Search" aria-label="Search fields"></label>
    <ul class="fields">
      <li><label><input type="checkbox"><svg><use href="#i-calc"/></svg>LED CM TGT</label></li>
      <li><label><input type="checkbox"><svg><use href="#i-calc"/></svg>MWO Ach %</label></li>
      <li><label><input type="checkbox"><svg><use href="#i-calc"/></svg>MWO CM Ach</label></li>
      <li><label><input type="checkbox"><svg><use href="#i-calc"/></svg>MWO CM TGT</label></li>
      <li><label><input type="checkbox"><svg><use href="#i-calc"/></svg>Rank Collective</label><svg class="warn" viewBox="0 0 14 14"><path d="M7 1 13.500 13H.500zM7 5v4M7 10.500v1.500"/></svg></li>
      <li><label><input type="checkbox"><svg><use href="#i-calc"/></svg>Rank measure:</label></li>
      <li><label><input type="checkbox"><svg><use href="#i-calc"/></svg>REF Ach %</label></li>
      <li><label><input type="checkbox"><svg><use href="#i-calc"/></svg>REF CM Ach</label></li>
      <li><label><input type="checkbox"><svg><use href="#i-calc"/></svg>REF CM TGT</label></li>
      <li><label><input type="checkbox"><svg><use href="#i-calc"/></svg>RM Ranking Measure</label></li>
      <li><label><input type="checkbox"><svg><use href="#i-calc"/></svg>Rounded Wtd Avg %</label></li>
      <li><label><input type="checkbox"><svg viewBox="0 0 16 18"><path d="M14 4V2H2l6 7-6 7h12v-2" stroke-width="1.500"/></svg>Value</label></li>
      <li><label><input type="checkbox"><svg><use href="#i-calc"/></svg>WD Ach %</label></li>
      <li><label><input type="checkbox"><svg><use href="#i-calc"/></svg>WD CM Ach</label></li>
      <li><label><input type="checkbox"><svg><use href="#i-calc"/></svg>WD CM TGT</label></li>
      <li><label><input type="checkbox"><svg><use href="#i-calc"/></svg>WM Ach %</label></li>
      <li><label><input type="checkbox"><svg><use href="#i-calc"/></svg>WM CM Ach</label></li>
      <li><label><input type="checkbox"><svg><use href="#i-calc"/></svg>WM CM TGT</label></li>
      <li><label><input type="checkbox"><svg><use href="#i-calc"/></svg>Wtd Avg %</label></li>
      <li><label><input type="checkbox"><svg><use href="#i-calc"/></svg>ZM Ranking Measure</label></li>
      <li class="tbl"><svg class="exp"><use href="#i-right"/></svg><svg><use href="#i-mtable"/></svg>MeasureTBL</li>
      <li class="tbl"><svg class="exp"><use href="#i-right"/></svg><svg><use href="#i-mtable"/></svg>MeasureTBL 5MTO23</li>
      <li class="tbl"><svg class="exp"><use href="#i-right"/></svg><svg><use href="#i-mtable"/></svg>MeasureTBLSJ</li>
    </ul>
    <i class="thumb"></i>
  </aside>
</main>

<footer class="status">
  <span>Page 36 of 43</span>
  <div class="zoom"><button aria-label="Zoom out">-</button><input type="range" min="10" max="110" value="47" aria-label="Zoom"><button aria-label="Zoom in">+</button><span>78%</span>
    <svg width="22" height="16" viewBox="0 0 22 16"><path d="M1 1h20v14H1z" stroke-width="1.800"/><path d="M4 6V4h3M15 4h3v2M18 10v2h-3M7 12H4v-2"/></svg></div>
</footer>

<div class="taskbar">
  <button class="start" aria-label="Start"><svg width="20" height="20" viewBox="0 0 20 20"><path d="M0 3 8 2v7.500H0zM9 2l11-2v9.500H9zM0 10.500h8V18l-8-1zM9 10.500h11V20L9 18z" fill="#fff" stroke="none"/></svg></button>
  <label class="tsearch"><svg width="21" height="20"><use href="#i-search"/></svg><input type="text" placeholder="Type here to search" aria-label="Type here to search">
    <span class="case"><svg width="38" height="32" viewBox="0 0 38 32"><path d="M13 6V3q0-2 2-2h8q2 0 2 2v3" stroke="#333" stroke-width="3"/><rect y="5" width="38" height="26" rx="3" fill="#c47206"/><path d="M0 8q0-3 3-3h32q3 0 3 3v10H0z" fill="#e79212"/><rect x="16" y="15" width="7" height="8" rx="1" fill="#ffd94a"/></svg></span></label>
  <button class="sys" aria-label="Cortana"><svg width="22" height="22" viewBox="0 0 22 22"><circle cx="11" cy="11" r="8.500" stroke="#fff" stroke-width="2.800"/></svg></button>
  <button class="sys" aria-label="Task view"><svg width="20" height="20" viewBox="0 0 20 20"><path d="M1 0v3h11V0M1 20v-3h11v3M1 6h11v8H1zM18 0v5M18 9v11M17 7h3" stroke="#fff" stroke-width="1.500"/></svg></button>
  <button class="app run" aria-label="Edge"><svg width="30" height="30" viewBox="0 0 30 30"><circle cx="15" cy="15" r="15" fill="#1878c8"/><path d="M1 11C4-4 30-4 30 14c0 6-7 8-12 6 4-5 1-9-4-9-6 0-11 4-13 8 0-3-1-5 0-8z" fill="#35c1b0"/><path d="M4 7C10-3 29-1 30 13c-4-8-18-10-26-6z" fill="#5ed46c"/><path d="M9 14c-1 8 6 14 15 12-6 6-19 5-22-5 1-5 4-7 7-7z" fill="#0c5a9e"/><path d="M0 18h15v12H0z" fill="#e08a14"/><path d="M0 18h15v5H0z" fill="#a35a0a"/><path d="M7 22h2v4H7z" fill="#fd5"/></svg></button>
  <button class="app run" aria-label="File Explorer"><svg width="28" height="26" viewBox="0 0 28 26"><path d="M0 2h10l3 4h14v18H0z" fill="#e8a317"/><path d="M0 7h28v17H0z" fill="#fcd462"/><path d="M5 24v-9h18v9h-4v-5H9v5z" fill="#3f9fdc"/></svg></button>
  <button class="app run" aria-label="Outlook"><svg width="32" height="32" viewBox="0 0 32 32"><path d="M8 1h20v21H8z" fill="#1490df"/><path d="M8 1h10v10H8z" fill="#0f65b5"/><path d="M18 6h10v6H18z" fill="#50c4f5"/><path d="M0 8h15v15H0z" fill="#0a5cad"/><ellipse cx="7.500" cy="15.500" rx="3.500" ry="4" stroke="#fff" stroke-width="2"/><path d="M13 18h19v14H13z" fill="#eab76b"/><path d="m13 19 9.500 8 9.500-8" stroke="#fff" stroke-width="1.500"/></svg></button>
  <button class="app run hot" aria-label="Power BI"><svg width="24" height="30" viewBox="0 0 24 30"><path d="M15 0h9v30h-9z" fill="#dfa41c"/><path d="M8 7h10v23H8z" fill="#f2c231"/><path d="M0 15h10v15H0z" fill="#fbdc6a"/></svg></button>
  <button class="app" aria-label="Chrome"><svg width="30" height="30"><use href="#i-chrome"/></svg></button>
  <button class="app run" aria-label="Chrome profile"><svg width="30" height="30"><use href="#i-chrome"/></svg></button>
  <div class="tray">
    <svg width="30" height="30" viewBox="0 0 30 30"><defs><linearGradient id="sun" x1="0" y1="0" x2="1" y2="1"><stop offset="0" stop-color="#fcc21b"/><stop offset="1" stop-color="#f07a16"/></linearGradient></defs><path d="M5 22a15 14 0 1 1 20 0z" fill="url(#sun)"/><path d="m10 24 5 4 5-4" stroke="#2a9be0" stroke-width="3"/></svg>
    <span class="sunset">Sunset</span>
    <svg width="16" height="10" viewBox="0 0 16 10"><path d="M1 9 8 2l7 7" stroke-width="1.600"/></svg>
    <svg class="usb" width="8" height="20" viewBox="0 0 8 20"><path d="M0 0h8v20H0z" fill="#000"/><path d="M2 1h4v5H2z" fill="#f06048"/><path d="M3 8v4M3 14v4h4" stroke="#aaa"/></svg>
    <svg width="20" height="14" viewBox="0 0 20 14"><path d="M4 13a4 4 0 0 1 0-8C6-1 14-1 15 5c6 0 6 8 1 8z" fill="#1170c5"/><path d="M5 13c0-4 3-5 6-4s8-1 8 2-4 2-4 2z" fill="#45b4f2"/></svg>
    <svg width="16" height="16" viewBox="0 0 16 16"><path d="M1 15C1 7 7 1 15 1M5 15C5 9 9 5 15 5M9 15c0-3 3-6 6-6" stroke-width="1.300"/><circle cx="14" cy="14" r="1.500" fill="#fff"/></svg>
    <svg width="20" height="14" viewBox="0 0 20 14"><path d="M5 3h13v10H5z" fill="#fff"/><path d="M19 6v4M1 1v4M4 1v4M0 5h5v3H2v5h3" stroke-width="1.500"/></svg>
    <svg width="21" height="18" viewBox="0 0 21 18"><path d="M1 6h3l4-4v14l-4-4H1zM11 6c2 2 2 4 0 6M14 4c3 3 3 7 0 10M17 2c4 4 4 10 0 14" stroke-width="1.300"/></svg>
    <span class="lang">ENG</span>
    <div class="clock">4:55 PM<br>12/1/2023</div>
    <svg width="32" height="32" viewBox="0 0 32 32"><path d="M1 2h20v17H9l-4 4v-4H1z" fill="#fff"/><path d="M4 7h14M4 11h14M4 15h9" stroke="#1c1c1c" stroke-width="1.500"/><circle cx="20" cy="21" r="9.500" fill="#333" stroke="#888"/><text x="17" y="26" class="num">1</text></svg>
  </div>
</div>
</body>
</html>
```
FILE: styles.css
```css
* { box-sizing: border-box; }
body { margin: 0; min-height: 100vh; display: flex; flex-direction: column; font-family: "Open Sans", "Noto Sans", sans-serif; font-size: 14px; line-height: 20px; color: #252423; background: #f2f1f0; overflow-x: hidden; }
h1, h2, h3, h4, p, ul { margin: 0; padding: 0; }
button, input, select { font: inherit; color: inherit; border: 0; background: none; padding: 0; margin: 0; border-radius: 0; }
a { color: inherit; text-decoration: none; }
svg { fill: none; stroke: currentColor; flex: none; display: block; }
svg [fill]:not([stroke]) { stroke: none; }
svg use { stroke: inherit; }
.defs { position: absolute; width: 0; height: 0; }

/* title bar */
.titlebar { height: 43px; background: #3b3a38; color: #fff; display: flex; align-items: center; position: relative; }
.quick { display: flex; gap: 19px; padding-left: 22px; }
.quick .dim { color: #777; }
.doc { margin-left: 12px; display: flex; align-items: center; gap: 10px; padding-top: 4px; white-space: nowrap; }
.caret { border: 5px solid transparent; border-top-color: #fff; border-bottom: 0; }
.topsearch { position: absolute; left: 0; right: 0; margin: auto; width: 500px; translate: 167px 0; height: 30px; top: 6px; background: #d4d4d4; border-radius: 2px; color: #333; display: flex; align-items: center; padding-left: 21px; gap: 15px; font-size: 16px; }
.topsearch input { flex: 1; min-width: 0; }
.topsearch input::placeholder { color: #2f5f55; opacity: 1; }
.account { margin-left: auto; display: flex; align-items: center; gap: 12px; }
.winbtns { display: flex; gap: 41px; padding: 0 20px 0 40px; }

/* menu */
.menu { height: 41px; background: #fafafa; display: flex; padding-left: 28px; font-size: 17px; align-items: stretch; }
.menu a { margin-right: 38px; padding-top: 10px; border-bottom: 3px solid transparent; height: 38px; }
.menu a:first-child { margin-right: 45px; }
.menu .on { font-weight: 600; border-color: #1f7a66; }
.share { margin: 5px 7px 0 auto; width: 105px; height: 30px; background: #117865; color: #fff; border-radius: 4px; font-size: 14px; display: flex; align-items: center; justify-content: center; gap: 6px; }

/* ribbon */
.ribbon { height: 116px; background: #fafafa; display: flex; padding-top: 4px; border-bottom: 1px solid #dedede; position: relative; }
.group { display: flex; flex-direction: column; align-items: center; border-right: 1px solid #d5d5d5; height: 110px; flex: none; }
.group > p { font-size: 12px; line-height: 12px; margin-top: auto; color: #444; }
.tools { display: flex; padding-top: 6px; }
.tool { display: flex; flex-direction: column; align-items: center; gap: 5px; white-space: nowrap; justify-content: flex-start; line-height: 20px; }
.tool > span { display: block; text-align: center; }
.tool > svg { overflow: visible; }
.dn { width: 8px; height: 8px; display: inline-block; margin-left: 2px; }
.g-data { width: 476px; } .g-queries { width: 145px; } .g-insert { width: 184px; } .g-calc { width: 143px; } .g-sens { width: 91px; } .g-share { width: 74px; }
.w48 { width: 48px; } .w50 { width: 50px; } .w52 { width: 52px; } .w56 { width: 56px; } .w60 { width: 60px; } .w62 { width: 62px; } .w68 { width: 68px; } .w70 { width: 70px; } .w72 { width: 72px; } .w74 { width: 74px; } .w98 { width: 98px; }
.clip { width: 201px; }
.clip .tools { align-self: stretch; padding-left: 16px; }
.paste { width: 40px; margin-right: 8px; }
.off button { color: #b4b4b4; }
.minis { display: flex; flex-direction: column; gap: 10px; margin-top: -1px; }
.minis button { display: flex; gap: 5px; align-items: center; white-space: nowrap; }
.collapse { position: absolute; right: 6px; bottom: 6px; }

/* work area */
.work { flex: 1; display: flex; min-height: 800px; }
.left { flex: 1; min-width: 0; display: flex; flex-direction: column; }
.stage { flex: 1; display: flex; min-width: 0; }
.rail { width: 51px; background: #f2f1f0; display: flex; flex-direction: column; color: #777; }
.rail button { height: 50px; display: flex; align-items: center; justify-content: center; }
.rail .on { color: #222; box-shadow: inset 3px 0 #117865; }
.report { flex: 1; min-width: 0; background: #188367; color: #fff; padding-left: 21px; }
.head { display: flex; justify-content: space-between; height: 128px; padding-right: 26px; }
.titles { padding-top: 40px; font-family: "Liberation Serif", serif; color: #dceee6; }
h1 { font-size: 32px; line-height: 40px; white-space: nowrap; }
.titles h2 { font-size: 15px; line-height: 15px; }
.slicers { padding-top: 6px; }
.drops { display: flex; gap: 8px; }
.drop { width: 139px; }
.drop:first-child { padding-top: 2px; }
.drop > span { font: bold 12px/18px "DejaVu Sans Mono", monospace; padding-left: 2px; display: block; color: #e8f5ef; margin-bottom: 5px; }
.pick { position: relative; }
.pick select { appearance: none; width: 100%; height: 26px; background: #808080; border: 1px solid #b5d2c7; padding-left: 5px; font-size: 12px; color: #fff; display: block; }
.pick svg { position: absolute; right: 5px; top: 9px; }
.levels { display: flex; gap: 3px; margin: 5px 3px 0 2px; }
.levels button { flex: 1; height: 25px; background: #fff; color: #666; font-size: 12px; border: 1px solid #7aa698; }
.levels .on { background: #2f2f2f; color: #fff; border-color: #2f2f2f; }

.body { display: flex; padding-right: 56px; height: 432px; }
.ranking { flex: 1; min-width: 0; position: relative; }
.ranking table { width: 100%; table-layout: fixed; border-spacing: 0; font-size: 12px; line-height: 16px; }
.ranking th { background: #808080; height: 43px; font-weight: 400; line-height: 18px; vertical-align: top; padding: 1px 3px 5px; border-right: 1px solid #c9d8d2; border-bottom: 1px solid #c9d8d2; position: relative; }
.sort { position: absolute; left: 6px; bottom: 2px; border: 5px solid transparent; border-bottom-color: #fff; border-top: 0; }
.ranking td { text-align: right; vertical-align: top; padding: 0 5px 0 0; height: 18px; border-right: 1px solid #c9d8d2; border-bottom: 1px solid #63887b; white-space: nowrap; }
.ranking tr:nth-child(odd) td { height: 19px; }
.ranking td:first-child { text-align: left; padding-left: 5px; }
.ranking td:nth-child(2) { text-align: center; padding: 0; }
.ranking td:nth-child(3) { background: linear-gradient(#efa587, #efa587) no-repeat 0 0 / var(--bar) 100% content-box; background-origin: padding-box; background-clip: padding-box; border-left: 5px solid #188367; padding: 0; box-shadow: none; border-right: 0; position: relative; }
.ranking td:nth-child(3) { border-left: 0; border-right: 1px solid #c9d8d2; padding: 0 5px; background-origin: content-box; background-size: var(--bar) 19px; }
.ranking tr > :last-child { border-right: 0; }
.ranking tbody tr:last-child td { border-bottom: 0; }
.lead100, .lead116, .lead174 { display: inline-block; width: 100px; }
.lead116 { width: 116px; } .lead174 { width: 174px; }
.scribble { position: absolute; left: -12px; top: 32px; }
.c15 { width: 15px; } .c28 { width: 28px; } .c29 { width: 29px; } .c31 { width: 31px; } .c33 { width: 33px; } .c36 { width: 36px; } .c44 { width: 44px; } .c45 { width: 45px; } .c47 { width: 47px; } .c49 { width: 49px; } .c51 { width: 51px; } .c52 { width: 52px; } .c53 { width: 53px; } .c55 { width: 55px; } .c61 { width: 61px; } .c62 { width: 62px; } .c65 { width: 65px; } .c80 { width: 80px; } .c199 { width: 199px; } .c233 { width: 234px; }
.scroll { width: 8px; margin: 0 34px 0 8px; border-radius: 4px; background: #86bfae; }
.scroll i { display: block; height: 204px; border-radius: 4px; background: #41705f; border: 1px solid #5c9683; }
.cards { width: 159px; padding-top: 11px; display: flex; flex-direction: column; gap: 14px; }
.cards article { height: 127px; background: #fff; border: 1px solid #143f33; border-radius: 12px; color: #222; text-align: center; }
.cards h3 { font: 16px/20px Roboto, sans-serif; padding-top: 4px; }
.cards strong { display: block; font-size: 20px; line-height: 24px; margin: 22px 16px 0 0; }
.cards article:nth-child(2) strong { margin-top: 30px; }
.cards article:nth-child(3) strong { margin-top: 37px; }

.foot { display: flex; padding-left: 30px; height: 143px; border-bottom: 1px solid #2f7a64; }
.foot h3 { font-family: "Liberation Serif", serif; text-decoration: underline; white-space: nowrap; }
.weights { width: 326px; padding-top: 36px; color: #e6f73c; }
.weights h3 { font-size: 28px; line-height: 32px; color: #dceee6; }
.weights p { font-size: 18px; line-height: 24px; padding-top: 13px; white-space: nowrap; }
.dist { padding-top: 36px; }
.dist h3 { font-size: 22px; line-height: 24px; padding-left: 21px; color: #3ddc6c; }
.dist table { width: 357px; table-layout: fixed; border-spacing: 0; font-size: 12px; line-height: 18px; margin-top: 9px; color: #e6f5ef; white-space: nowrap; }
.dist th { text-align: left; font-weight: 400; padding: 0 0 8px 5px; border-bottom: 1px solid #b5d2c7; }
.dist thead td { border-bottom: 1px solid #b5d2c7; }
.dist tbody td { text-align: right; padding: 0 5px 0 0; }
.dist tbody td:first-child { border-right: 1px solid #b5d2c7; }
.dist tr > :last-child { font-weight: 700; }

.filters { width: 42px; background: #fff; display: flex; flex-direction: column; align-items: center; padding-top: 16px; }
.filters svg { margin-bottom: 19px; }
.filters > svg { margin: 0 0 11px 4px; }
.filters span { writing-mode: vertical-rl; font-size: 17px; font-weight: 600; line-height: 20px; }
.flip { transform: scaleX(-1); }

/* page tabs */
.pages { height: 45px; display: flex; background: #f2f1f0; border-bottom: 1px solid #dcdcdc; padding-left: 51px; }
.modes { width: 160px; display: flex; align-items: flex-start; border-right: 1px solid #bbb; flex: none; padding-left: 13px; color: #555; }
.modes button { width: 30px; height: 40px; display: flex; align-items: center; justify-content: center; border-bottom: 3px solid transparent; margin-right: 26px; }
.modes .on { border-color: #117865; }
.modes .arrow { width: 28px; margin: 4px 0 0 0; }
.modes .arrow:nth-child(3) { margin-left: -14px; }
.prev, .next { border: 5px solid transparent; border-right: 5px solid #111; border-left: 0; }
.next { border-left: 5px solid #111; border-right: 0; }
.tabs { flex: 1; min-width: 0; display: flex; overflow: hidden; background: #fff; }
.tabs a { flex: none; display: flex; align-items: center; justify-content: center; gap: 4px; border-right: 1px solid #ccc; white-space: nowrap; font-size: 14px; }
.tabs a svg { color: #888; margin-top: 6px; }
.tabs .on { font-weight: 600; box-shadow: inset 0 -5px #117865; }
.tabs .last { padding-left: 14px; border: 0; }
.c131 { width: 131px; } .c137 { width: 137px; } .c152 { width: 152px; } .c159 { width: 159px; } .c180 { width: 180px; } .c217 { width: 217px; }
.add { width: 49px; background: #117865; color: #fff; margin: 3px 1px 2px 0; display: flex; align-items: center; justify-content: center; }

/* visualizations */
.viz { --line: #8a8886; width: 226px; border-left: 1px solid #dcdad8; border-right: 1px solid #dcdad8; flex: none; }
.viz header, .data header { display: flex; justify-content: space-between; padding: 13px 10px 0 9px; }
.viz header h2, .data header h2 { font-size: 18px; line-height: 24px; font-weight: 600; }
.viz .sub { padding: 11px 0 0 9px; font-size: 14px; line-height: 20px; }
.kinds { display: flex; gap: 43px; padding: 4px 0 0 9px; }
.kinds button { width: 39px; height: 40px; display: flex; align-items: center; justify-content: center; }
.kinds .on { background: #cfcdcb; }
.notch { margin-top: 5px; }
.gallery { border-top: 1px solid var(--line); margin-top: -1px; padding: 14px 0 0 13px; display: grid; grid-template-columns: repeat(6, 24px); gap: 11px; position: relative; color: #444; }
.gallery::before { content: ""; position: absolute; left: 20px; top: -1px; width: 20px; height: 1px; background: #f2f1f0; }
.gallery button { width: 24px; height: 24px; }
.gallery svg { width: 24px; height: 24px; stroke-width: 1.5; overflow: visible; }
.gallery .b { fill: #83bdf0; stroke: #2468a8; }
.gallery .g { fill: #c4c2c0; stroke: #8a8886; }
.gallery .w { fill: #fff; stroke: #444; }
.gallery .edge { stroke: #2468a8; }
.gallery text { font-size: 9px; fill: #2f88c7; stroke: none; }
.gallery .letter { color: #2f78a8; font-size: 18px; font-weight: 700; line-height: 24px; }
.more { padding-left: 15px; line-height: 20px; margin-top: 5px; font-size: 16px; font-weight: 600; }
.custom { margin: 15px 6px 0 8px; border-top: 1px dashed #ccc; display: flex; gap: 11px; padding: 10px 0 9px 5px; }
.wells { border-top: 1px solid #d5d3d1; padding: 12px 7px 0 4px; }
.wells h4 { font-size: 14px; font-weight: 400; padding-left: 10px; line-height: 20px; }
.wells .bold { font-weight: 600; padding-top: 15px; line-height: 20px; }
.well { background: #fff; border: 1px dashed #b8b6b4; height: 32px; line-height: 30px; margin-top: 7px; white-space: nowrap; padding-left: 10px; }
.well.tall { height: 34px; line-height: 32px; margin-top: 6px; padding-left: 13px; }
.switch { display: flex; align-items: center; justify-content: space-between; height: 34px; padding: 0 20px 0 10px; position: relative; }
.bold + .switch { margin-top: 4px; }
.switch b { font-weight: 400; }
.switch input { appearance: none; width: 40px; height: 20px; border-radius: 10px; border: 1px solid #605e5c; display: flex; align-items: center; padding: 0 5px; }
.switch input::before { content: ""; width: 11px; height: 11px; border-radius: 50%; background: #605e5c; }
.switch input:checked { background: #117865; border-color: #117865; justify-content: flex-end; }
.switch input:checked::before { background: #fff; }
.switch span { position: absolute; right: 25px; font-size: 11px; color: #605e5c; }
.switch input:checked + span { right: 40px; color: #fff; }

/* data */
.data { width: 355px; flex: none; position: relative; }
.find { margin: 20px 5px 0; height: 33px; border: 1px solid #605e5c; border-radius: 2px; display: flex; align-items: center; gap: 6px; padding-left: 9px; font-size: 16px; }
.find input { flex: 1; min-width: 0; }
.find input::placeholder { color: #555; opacity: 1; }
.fields { list-style: none; padding: 8px 0 0; color: #484644; }
.fields li { height: 30px; display: flex; align-items: center; padding-left: 48px; }
.fields label { display: flex; align-items: center; }
.fields input { appearance: none; width: 15px; height: 16px; border: 1px solid #777; border-radius: 2px; margin-right: 9px; }
.fields svg { width: 16px; height: 18px; margin-right: 7px; }
.fields .warn { width: 14px; height: 14px; color: #d9534f; margin: 0 40px 0 auto; }
.fields .tbl { padding-left: 12px; }
.fields .tbl svg { width: 18px; height: 18px; margin-right: 5px; }
.fields .tbl .exp { width: 10px; height: 16px; margin-right: 7px; }
.thumb { position: absolute; right: 5px; top: 251px; width: 10px; height: 204px; background: #c8c6c4; }

/* status */
.status { height: 29px; display: flex; align-items: center; justify-content: space-between; padding: 0 23px 0 7px; background: #f2f1f0; color: #555; font-size: 14px; }
.zoom { display: flex; align-items: center; }
.zoom button { font-weight: 700; font-size: 16px; line-height: 16px; }
.zoom input { appearance: none; width: 125px; height: 14px; margin: 0 6px; background: linear-gradient(#666, #666) no-repeat 63px 3px / 2px 8px, linear-gradient(#777, #777) no-repeat 0 6px / 100% 1px; }
.zoom input::-webkit-slider-thumb { appearance: none; width: 5px; height: 14px; background: #555; }
.zoom span { margin: 0 19px 0 21px; }

/* taskbar */
.taskbar { height: 51px; background: #1c1c1c; color: #fff; display: flex; align-items: stretch; border-top: 1px solid #000; }
.taskbar button { display: flex; align-items: center; justify-content: center; flex: none; }
.start { width: 60px; }
.tsearch { width: 360px; background: #f0f0f0; color: #222; display: flex; align-items: center; padding: 0 5px 0 15px; gap: 14px; font-size: 17px; }
.tsearch input { flex: 1; min-width: 0; }
.tsearch input::placeholder { color: #333; opacity: 1; }
.case { width: 89px; height: 40px; border-radius: 6px; background: #e0e0e0; display: flex; align-items: center; justify-content: center; }
.sys { width: 60px; }
.sys + .app { margin-left: 3px; }
.app { width: 62px; position: relative; }
.run::after { content: ""; position: absolute; left: 5px; right: 6px; bottom: 0; height: 3px; background: #7ab0dc; }
.hot { background: #454545; }
.hot::after { left: 0; right: 0; }
.tray { margin-left: auto; display: flex; align-items: center; padding-right: 20px; font-size: 14px; }
.tray > svg { margin-right: 12px; }
.tray .usb { margin: 0 16px 0 7px; }
.sunset { font-size: 17px; margin-right: 22px; }
.lang { margin-right: 16px; }
.clock { text-align: center; line-height: 23px; margin-right: 22px; }
.tray > svg:last-child { margin-right: 0; }
.num { font-size: 13px; fill: #fff; stroke: none; }
```
